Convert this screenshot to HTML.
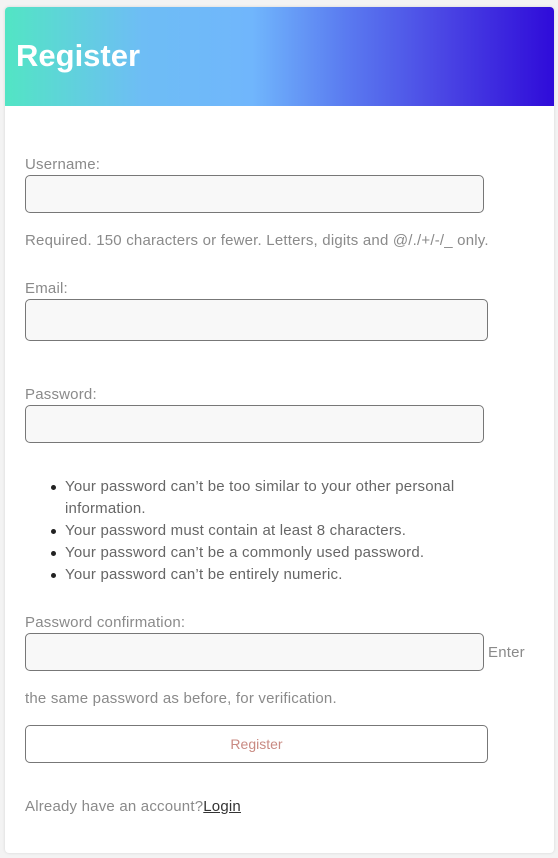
<!DOCTYPE html>
<html><head><style>
body{margin:0;width:558px;height:858px;background:#f3f3f3;font-family:"Liberation Sans",sans-serif;position:relative;overflow:hidden}
.card{position:absolute;left:5px;top:7px;width:549px;height:846px;background:#fff;border-radius:4px;box-shadow:0 0 3px rgba(0,0,0,.12)}
.hd{position:absolute;left:5px;top:7px;width:549px;height:99px;border-radius:4px 4px 0 0;background:linear-gradient(90deg,#52e5c4 0%,#6ebdf5 25%,#70b6fc 45%,#5a7bf0 62%,#4a45e4 80%,#2f0bd9 100%)}
.hd span{position:absolute;left:11px;top:31px;color:#fff;font-weight:bold;font-size:31px}
.t{position:absolute;color:#8a8a8a;font-size:15px;letter-spacing:0.2px;white-space:nowrap}
.in{position:absolute;background:#f8f8f8;border:1px solid #777;border-radius:5px;box-sizing:border-box}
.b{position:absolute;left:51px;width:5px;height:5px;border-radius:50%;background:#222}
.tb{color:#666}
</style></head><body>
<div class="card"></div>
<div class="hd"><span>Register</span></div>
<div class="t" style="left:25px;top:156px">Username:</div>
<div class="in" style="left:25px;top:175px;width:459px;height:38px"></div>
<div class="t" style="left:25px;top:232px">Required. 150 characters or fewer. Letters, digits and @/./+/-/_ only.</div>
<div class="t" style="left:25px;top:280px">Email:</div>
<div class="in" style="left:25px;top:299px;width:463px;height:42px"></div>
<div class="t" style="left:25px;top:386px">Password:</div>
<div class="in" style="left:25px;top:405px;width:459px;height:38px"></div>
<div class="b" style="top:485px"></div><div class="t tb" style="left:65px;top:478px">Your password can’t be too similar to your other personal</div>
<div class="t tb" style="left:65px;top:500px">information.</div>
<div class="b" style="top:529px"></div><div class="t tb" style="left:65px;top:522px">Your password must contain at least 8 characters.</div>
<div class="b" style="top:551px"></div><div class="t tb" style="left:65px;top:544px">Your password can’t be a commonly used password.</div>
<div class="b" style="top:573px"></div><div class="t tb" style="left:65px;top:566px">Your password can’t be entirely numeric.</div>
<div class="t" style="left:25px;top:614px">Password confirmation:</div>
<div class="in" style="left:25px;top:633px;width:459px;height:38px"></div>
<div class="t" style="left:488px;top:644px">Enter</div>
<div class="t" style="left:25px;top:690px">the same password as before, for verification.</div>
<div class="in" style="left:25px;top:725px;width:463px;height:38px;background:#fff"></div>
<div class="t" style="left:25px;top:736px;width:463px;text-align:center;color:#c98a82;font-size:14px;letter-spacing:0">Register</div>
<div class="t" style="left:25px;top:798px">Already have an account?<span style="color:#333;text-decoration:underline">Login</span></div>
</body></html>
